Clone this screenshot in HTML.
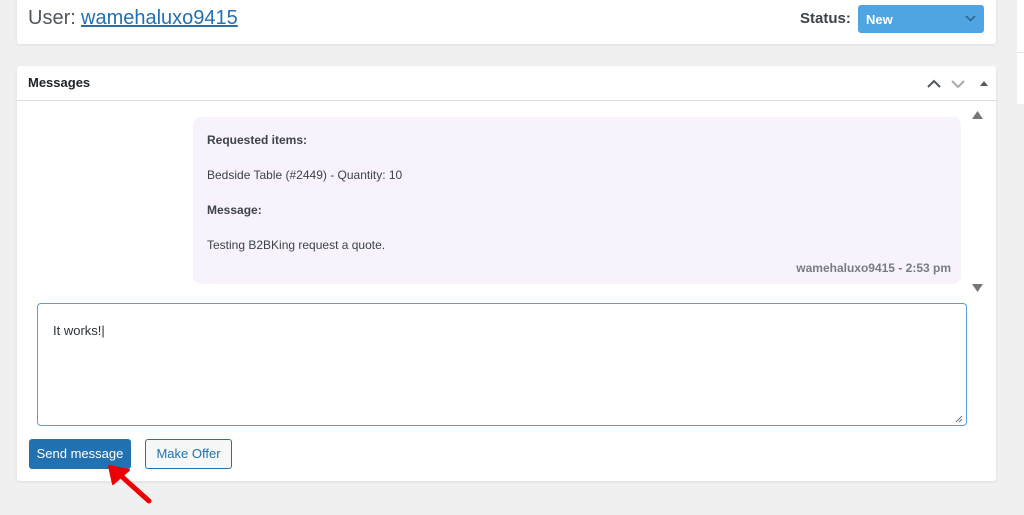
<!DOCTYPE html>
<html><head><meta charset="utf-8"><style>
*{box-sizing:border-box;margin:0;padding:0}
body{width:1024px;height:515px;background:#f0f0f1;font-family:"Liberation Sans",sans-serif;position:relative;overflow:hidden;color:#3c434a}
.card{position:absolute;background:#fff;box-shadow:0 1px 3px rgba(0,0,0,.08);border-radius:3px}
.abs{position:absolute}
</style></head><body>
<div class="card" style="left:17px;top:-5px;width:979px;height:49px"></div>
<div class="abs" style="left:28px;top:7px;font-size:20px;color:#50575e">User:</div>
<div class="abs" style="left:81px;top:7px;font-size:20px;color:#2271b1;text-decoration:underline">wamehaluxo9415</div>
<div class="abs" style="left:800px;top:10px;font-size:15px;color:#3c434a;font-weight:bold">Status:</div>
<div class="abs" style="left:858px;top:5px;width:126px;height:28px;background:#4ea5e2;border-radius:3px;color:#fff;font-weight:bold;font-size:13px;padding:7px 8px">New
<svg style="position:absolute;right:8px;top:10px" width="11" height="7" viewBox="0 0 11 7"><path d="M1 1l4.5 4.5L10 1" fill="none" stroke="#2a5f8a" stroke-width="1.5"/></svg></div>
<div class="abs" style="left:1017px;top:0;width:7px;height:104px;background:#fff"></div>
<div class="abs" style="left:1017px;top:52px;width:7px;height:1px;background:#e5e5e5"></div>

<div class="card" style="left:17px;top:66px;width:979px;height:415px"></div>
<div class="abs" style="left:28px;top:75px;font-size:13px;font-weight:bold;color:#1d2327">Messages</div>
<div class="abs" style="left:17px;top:100px;width:979px;height:1px;background:#dcdcde"></div>
<svg class="abs" style="left:926px;top:78px" width="70" height="12" viewBox="0 0 70 12"><path d="M2 9l6-6 6 6" fill="none" stroke="#50575e" stroke-width="2"/><path d="M26 3l6 6 6-6" fill="none" stroke="#a7aaad" stroke-width="2"/><path d="M54 8l4-5 4 5z" fill="#50575e"/></svg>
<svg class="abs" style="left:972px;top:111px" width="11" height="8"><path d="M0 8L5.5 0 11 8z" fill="#777"/></svg>
<svg class="abs" style="left:972px;top:284px" width="11" height="8"><path d="M0 0L5.5 8 11 0z" fill="#777"/></svg>

<div class="abs" style="left:193px;top:117px;width:768px;height:167px;background:#f7f2fc;border-radius:8px"></div>
<div class="abs" style="left:207px;top:133px;font-size:12px;font-weight:bold;color:#3c434a">Requested items:</div>
<div class="abs" style="left:207px;top:168px;font-size:12px;color:#3c434a">Bedside Table (#2449) - Quantity: 10</div>
<div class="abs" style="left:207px;top:203px;font-size:12px;font-weight:bold;color:#3c434a">Message:</div>
<div class="abs" style="left:207px;top:238px;font-size:12px;color:#3c434a">Testing B2BKing request a quote.</div>
<div class="abs" style="left:700px;top:261px;width:251px;text-align:right;font-size:12px;font-weight:bold;color:#787c82">wamehaluxo9415 - 2:53 pm</div>

<div class="abs" style="left:37px;top:303px;width:930px;height:123px;border:1px solid #5b9dd9;border-radius:4px;background:#fff"></div>
<div class="abs" style="left:53px;top:323px;font-size:13px;color:#2c3338">It works!|</div>
<svg class="abs" style="left:955px;top:415px" width="8" height="8"><path d="M1 7L7 1M4 7L7 4" stroke="#777"/></svg>

<div class="abs" style="left:29px;top:439px;width:102px;height:30px;background:#2271b1;border-radius:3px;color:#fff;font-size:13px;text-align:center;line-height:30px">Send message</div>
<div class="abs" style="left:145px;top:439px;width:87px;height:30px;border:1px solid #2271b1;background:#f6f7f7;border-radius:3px;color:#2271b1;font-size:13px;text-align:center;line-height:28px">Make Offer</div>
<svg class="abs" style="left:105px;top:465px" width="50" height="40" viewBox="0 0 50 40"><path d="M14 9L44 36" stroke="#e00" stroke-width="5" stroke-linecap="round"/><path d="M4 1L8 19L24 5z" fill="#e00" stroke="#e00" stroke-width="2" stroke-linejoin="round"/></svg>
</body></html>
